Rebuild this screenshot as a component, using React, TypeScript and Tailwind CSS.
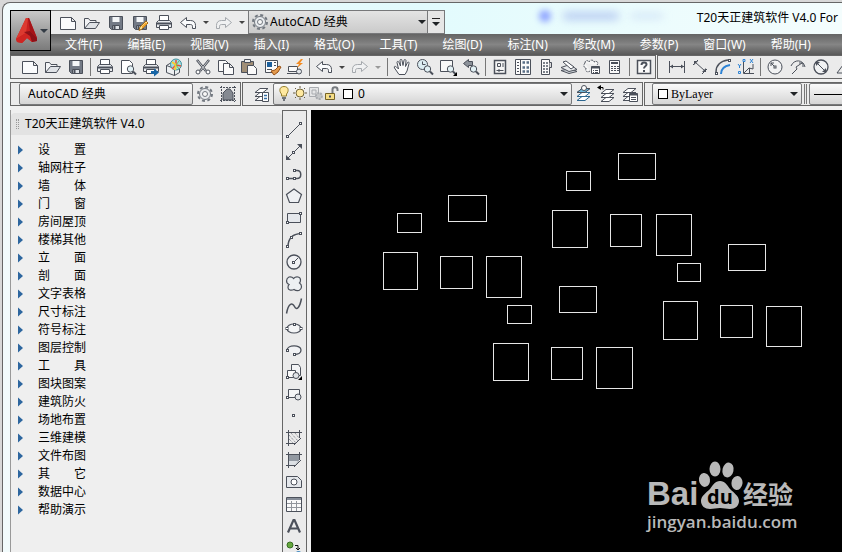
import { useState } from "react";
import type { ReactNode } from "react";
import clsx from "clsx";

const INK = "#4b505a";

const disk = (
  <>
    <path d="M3.500 3.500h13v13h-11l-2-2z" fill="#737a86" />
    <path d="M6.500 4h7v5h-7z" fill="#f4f6f8" stroke="none" />
    <path d="M6.500 12.500h7v4h-7z" fill="#dfe3e8" />
    <path d="M8.500 13v3" strokeWidth="2" />
  </>
);

const printer = (
  <>
    <path d="M5.500 8v-5.500h9V8" fill="#fff" />
    <path d="M4.500 7.500h11l2 2v5h-15v-5z" fill="#e9ebee" />
    <path d="M3 10.500h14" strokeWidth="2" />
    <path d="M5.500 12.500h9v4h-9z" fill="#fff" />
  </>
);

const gear = (
  <>
    <circle cx="10" cy="10" r="7" strokeWidth="2" strokeDasharray="3 2.500" stroke="#737981" />
    <circle cx="10" cy="10" r="5.500" fill="#e8ebee" stroke="#737981" />
    <circle cx="10" cy="10" r="2.500" fill="#f8f8f8" stroke="#737981" />
  </>
);

const magnifier = (
  <>
    <circle cx="12.500" cy="12" r="3.200" fill="#e2f1f5" />
    <path d="M15 14.500l3 3" strokeWidth="2" />
  </>
);

const layers = (
  <>
    <path d="M3 16.500h8l5-4H8z" fill="#fff" />
    <path d="M3 12.500h8l5-4H8z" fill="#fff" />
    <path d="M3 8.500h8l5-4H8z" fill="#fff" />
  </>
);

const node = (x: number, y: number) => (
  <rect x={x - 1} y={y - 1} width="2" height="2" fill="#fff" />
);

const icons: Record<string, ReactNode> = {
  new: <path d="M2.500 4.500h11l4 4v8h-15zM13.500 4.500v4h4" fill="#fafbfc" />,
  open: (
    <>
      <path d="M2.500 15.500v-10h4l1.500 2h6v2" fill="#f2f3f5" />
      <path d="M2.500 15.500l5-6h10l-4 6z" fill="#dfe2e6" />
    </>
  ),
  save: disk,
  saveAs: (
    <>
      {disk}
      <path d="M9 17.500l1-3.500 6-6 2 2-6 6z" fill="#fff1b0" stroke="#a46a16" />
      <path d="M12 14.500l4.500-4.500" stroke="#f1a52d" strokeWidth="2" />
    </>
  ),
  print: printer,
  preview: (
    <>
      <path d="M3.500 3.500h8l3 3v10h-11z" fill="#fff" />
      {magnifier}
    </>
  ),
  publish: (
    <>
      {printer}
      <path d="M10 15.500h4" stroke="#1766a6" strokeWidth="3" />
      <path d="M13 11.500l5 4-5 4z" fill="#1766a6" stroke="none" />
    </>
  ),
  globe: (
    <>
      <path d="M2.500 8.500l5-3 8 3v7l-5 3-8-3z" fill="#edf0f2" />
      <path d="M2.500 8.500l8 3v7" />
      <circle cx="12" cy="7.500" r="5.500" fill="#9fdde4" stroke="#42929d" />
      <path d="M12 3v5l5 1M12 8l-4 4" stroke="#e5523a" strokeWidth="1.500" />
      <path d="M8 5l4 3-1 5" stroke="#f7cf31" strokeWidth="2" />
      <path d="M15 4l-3 4 3 4" stroke="#6fbf58" />
    </>
  ),
  cut: (
    <>
      <path d="M4 3l9 11M16 3L7 14" strokeWidth="2.500" />
      <path d="M4.500 3.500l8 10M15.500 3.500l-8 10" stroke="#eceef0" strokeWidth="0.800" />
      <circle cx="5" cy="15" r="2" fill="#fff" />
      <circle cx="15" cy="15" r="2" fill="#fff" />
    </>
  ),
  copy: (
    <>
      <path d="M2.500 3.500h7l3 3v8h-10z" fill="#fafafa" />
      <path d="M7.500 6.500h6l4 4v7h-10zM13.500 6.500v4h4" fill="#fafafa" />
    </>
  ),
  paste: (
    <>
      <path d="M2.500 4.500h12v11h-12z" fill="#a08e76" />
      <path d="M5.500 2.500h6v3h-6z" fill="#eee" />
      <path d="M8.500 8.500h6l3 3v6h-9z" fill="#fafafa" />
    </>
  ),
  match: (
    <>
      <path d="M3.500 3.500h12v12h-12z" fill="#fafafa" />
      <path d="M5 5h5v5H5z" fill="#1b5f9c" stroke="none" />
      <path d="M12 5.500h2M12 8.500h2M5 12.500h5" />
      <path d="M9 14l4-1 4-4 2 1-3 5-4 3z" fill="#e29a4d" stroke="#9a5116" />
    </>
  ),
  blockEdit: (
    <>
      <path d="M3.500 9.500h9v5h-9z" fill="#fafafa" />
      <path d="M2 16.500h11" />
      <circle cx="14" cy="14.500" r="2.500" fill="#e2e6ea" />
      <path d="M16 2l-5 5h3l-2 4 6-5h-3l3-4z" fill="#f38b21" stroke="none" />
    </>
  ),
  undo: <path d="M2.500 9.500l6-5v3h4c3.500 0 5 2 5 5v3h-3v-2c0-1.500-1-2-2-2h-4v3z" fill="#fafbfc" />,
  redo: (
    <path
      d="M17.500 9.500l-6-5v3h-4c-3.500 0-5 2-5 5v3h3v-2c0-1.500 1-2 2-2h4v3z"
      fill="#f0f1f2"
      stroke="#a4a8ad"
    />
  ),
  pan: (
    <path
      d="M7 17.500L2.500 11c-1-2 1-2 2-1l2 2L5 5.500c0-1.500 1.500-1.500 2 0L8.500 9 8 3.500c0-1.500 2-1.500 2 0l1 5 1-5c0-1.500 2-1 2 0l-.5 6 2-4c1-1 2 0 1.500 1L15 14l-2 3.500z"
      fill="#fafafa"
    />
  ),
  zoomRealtime: (
    <>
      <circle cx="7.500" cy="7.500" r="5" fill="#dcedf2" />
      <path d="M7.500 4.500v3h3" />
      {magnifier}
    </>
  ),
  zoomWindow: (
    <>
      <path d="M2.500 3.500h12v11h-12z" fill="#f7f8f8" />
      {magnifier}
      <path d="M19 15v4h-4z" fill="#000" stroke="none" />
    </>
  ),
  zoomPrevious: (
    <>
      <path d="M2.500 6.500l5-4v2h4v4h-4v2z" fill="#8c929a" />
      {magnifier}
    </>
  ),
  properties: (
    <>
      <path d="M4.500 3.500h11v13h-11z" fill="#f5f5f5" strokeWidth="1.500" />
      <path d="M7.500 6.500h3v3h-3zM13 6v4M6.500 13.500h7M9 12v3" />
    </>
  ),
  designCenter: (
    <>
      <path d="M2.500 2.500h15v15h-15z" fill="#fafafa" />
      <path d="M7.500 3v14M4 5.500h2M4 8.500h2M4 11.500h2M4 14.500h2" />
      <path d="M9.500 5.500h2.500M9.500 10.500h2.500M9.500 14.500h2.500M13.500 5.500h2.500M13.500 10.500h2.500M13.500 14.500h2.500" strokeWidth="2.500" stroke="#5a6f86" />
    </>
  ),
  palettes: (
    <>
      <path d="M5.500 2.500h8v15h-8z" fill="#fafafa" />
      <path d="M8 5v11M11 5v11" strokeWidth="2" strokeDasharray="2 1" stroke="#7c828b" />
      <path d="M13.500 5.500h2v5h-2" fill="#ddd" />
    </>
  ),
  sheetSet: (
    <>
      <path d="M2 13.500l8 3 8-2-6-3z" fill="#cfd4d9" />
      <path d="M2 10.500l8 4 8-2-7-5z" fill="#e9ebed" />
      <path d="M4 5l3-1 8 6-3 2z" fill="#fff" />
    </>
  ),
  markup: (
    <>
      <path d="M3 6c0-3 3-3 4-1 1-3 5-2 5 0 3-2 5 1 3 3M3 6c-2 2-1 5 1 5-1 3 1 5 4 3" strokeDasharray="2 1" fill="#f6f6f6" />
      <path d="M9.500 9.500h8v7h-8z" fill="#fff" />
      <path d="M9.500 10.500h8" strokeWidth="2" />
      <path d="M11 13.500h1M13 13.500h3M11 15.500h1M13 15.500h3" />
    </>
  ),
  calculator: (
    <>
      <path d="M4.500 3.500h10v13h-10z" fill="#fafafa" />
      <path d="M6 6h7" strokeWidth="2" />
      <path d="M6 9.500h8M6 11.500h8M6 13.500h8" strokeDasharray="2 1" />
    </>
  ),
  help: (
    <>
      <path d="M3.500 3.500h13v13h-13z" fill="#fafafa" strokeWidth="1.500" />
      <path d="M7.500 8c0-3.500 5-3 5-.5 0 2-2.500 1.500-2.500 4M10 13v2" strokeWidth="2" />
    </>
  ),
  dimLinear: (
    <>
      <path d="M2.500 4v12M17.500 4v12M3 9.500h14" />
      <path d="M3 9.500l3-2v4zM17 9.500l-3-2v4z" fill={INK} stroke="none" />
    </>
  ),
  dimAligned: (
    <>
      <path d="M3 8l5-5M12 17l5-5M5 5l10 9" />
      <path d="M4 4h4l-4 4zM16 15h-4l4-4z" fill={INK} stroke="none" />
    </>
  ),
  dimArc: (
    <>
      <path d="M3 15c0-6 4-11 12-12" strokeWidth="1.500" />
      <path d="M8 17c0-5 3-8 9-9" stroke="#2d83d5" strokeWidth="2" />
      {node(3.5, 16.5)}
      {node(16.5, 3.5)}
    </>
  ),
  dimOrdinate: (
    <>
      <path d="M7.500 5v11.500H18M8 16l5-5 4 1V7M13.500 11v5" />
      <path d="M2 7l1.500 2L5 7M3.500 9v2M14 2l3 4M17 2l-3 4M7 2.500h2v2H7zM2.500 14.500h2v2h-2z" stroke="#2d83d5" />
    </>
  ),
  dimRadius: (
    <>
      <circle cx="10" cy="10" r="7" fill="#f1f2f3" />
      <path d="M10 10L6 6M6 9V6h3" />
      {node(10, 10)}
    </>
  ),
  dimJogged: (
    <>
      <path d="M3 9c3-7 12-7 14 1" />
      <path d="M4 17l5-5-1-2 6-4M11 6h4v4" />
    </>
  ),
  dimDiameter: (
    <>
      <circle cx="10" cy="10" r="7" fill="#f1f2f3" strokeWidth="1.300" />
      <path d="M5 5l10 10" />
      <path d="M5 5h4L5 9zM15 15h-4l4-4z" fill={INK} stroke="none" />
    </>
  ),
  dimAngular: <path d="M3 16L12 4M3 16h14M10 7c3 2 4 5 4 9" />,
  gear,
  workspace: (
    <>
      <path d="M3.500 2v16M16.500 2v16M2 3.500h16M2 16.500h16" strokeDasharray="2 1" />
      <path d="M5 9l4-4h3l3 4v7H5z" fill="#858a92" />
    </>
  ),
  layerProps: (
    <>
      {layers}
      <path d="M10.500 8.500h6v9h-6z" fill="#fff" />
      <path d="M12 11.500h3M12 14.500h3" stroke="#356fa5" strokeWidth="1.500" />
    </>
  ),
  layerMake: (
    <>
      <g stroke="#2d6790">{layers}</g>
      <path d="M3 8.500h8l5-4H8z" fill="#6db6da" />
      <circle cx="10" cy="4" r="2.500" fill="#fff" />
    </>
  ),
  layerPrev: (
    <>
      <g transform="translate(1 1)">{layers}</g>
      <path d="M1 3.500h5v2" stroke="#000" />
      <path d="M4 1v5L0 3.500z" fill="#000" stroke="none" />
    </>
  ),
  layerState: (
    <>
      {layers}
      <path d="M9.500 9.500h8v8h-8z" fill="#fff" />
      <path d="M9.500 10.500h8" strokeWidth="2" />
      <path d="M11 13.500h5M11 15.500h5" />
    </>
  ),
  bulb: (
    <>
      <path d="M10 2.500c5 0 5 5 2.500 7.500v2h-5v-2C5 7.500 5 2.500 10 2.500z" fill="#ffe9a0" stroke="#96802e" />
      <path d="M8 14h4M9 16h2" strokeWidth="1.500" />
    </>
  ),
  sun: (
    <>
      <circle cx="10" cy="9" r="4" fill="#ffe9a0" stroke="#746639" />
      <path d="M10 2v2M10 14v2M3 9h2M15 9h2M5 4l1 1M14 13l1 1M15 4l-1 1M5 14l1-1" stroke="#665d42" />
    </>
  ),
  freeze: (
    <g stroke="#a9acb0">
      <path d="M3.500 3.500h9v9h-9zM6 6h4v4H6z" fill="#e5e6e7" />
      <circle cx="13" cy="12" r="3" fill="#c5c7c9" strokeWidth="2" strokeDasharray="2 1" />
    </g>
  ),
  unlock: (
    <>
      <path d="M10.500 9V5.500c0-3 5-3 5 0V7" strokeWidth="2" stroke="#767a7f" />
      <path d="M3.500 9.500h9v6h-9z" fill="#f5dd86" stroke="#766325" />
      <path d="M8 11.500v2" strokeWidth="2" />
    </>
  ),
  line: (
    <>
      <path d="M4 16L16 4" />
      {node(3.5, 16.5)}
      {node(16.5, 3.5)}
    </>
  ),
  xline: (
    <>
      <path d="M4 16L16 4" />
      <path d="M2 18v-5l5 5zM18 2v5l-5-5z" fill={INK} stroke="none" />
      {node(9.5, 10.5)}
    </>
  ),
  polyline: (
    <>
      <path d="M4 14.500h9c5 0 5-8 0-8h-2" strokeWidth="1.500" />
      {node(3.5, 14.5)}
      {node(10.5, 14.5)}
      {node(10.5, 6.5)}
    </>
  ),
  polygon: <path d="M10 3l7.500 5.500-3 8h-9l-3-8z" fill="#eef0f3" strokeWidth="1.200" />,
  rectangle: (
    <>
      <path d="M3.500 5.500h13v9h-13z" fill="#e5e8ec" />
      {node(3.5, 14.5)}
      {node(16.5, 5.5)}
    </>
  ),
  arc: (
    <>
      <path d="M4 17C4 9 8 4 17 3.500" strokeWidth="1.500" />
      {node(3.5, 16.5)}
      {node(7.5, 7.5)}
      {node(16.5, 3.5)}
    </>
  ),
  circle: (
    <>
      <circle cx="10" cy="10" r="7" fill="#f1f2f4" strokeWidth="1.300" />
      <path d="M10 10l4-4" />
      {node(9.5, 10.5)}
    </>
  ),
  cloud: (
    <path
      d="M9.500 4.500c3-3 7-1.500 7 1.500 0 2-1 3-1 3 3 2 2.500 6-.5 7.500-3 .5-5-1-5-1-3 1.500-6 .5-6-2 0-2 1-3 1-3-3.500-1.500-3-6 0-7.500 3-.5 4.500 1.500 4.500 1.500z"
      fill="#edf0f2"
      strokeWidth="1.200"
    />
  ),
  spline: <path d="M2.500 17.500c2-11 6-11 8-7s5 2 7-8" strokeWidth="1.500" />,
  ellipse: (
    <>
      <ellipse cx="10" cy="10.500" rx="7" ry="4.500" fill="#f4f5f6" strokeWidth="1.200" />
      {node(3, 10.5)}
      {node(17, 10.5)}
      {node(10.5, 6.5)}
    </>
  ),
  ellipseArc: (
    <>
      <path d="M3 10.500c0-6 14-6 14-.5 0 3-3 4.500-7 4.500" strokeWidth="1.300" fill="#f1f2f4" />
      {node(3.5, 10.5)}
      {node(10.5, 14.5)}
    </>
  ),
  insert: (
    <>
      <path d="M7.500 2.500h7l2 3v8h-9z" fill="#f2f3f5" />
      <path d="M3.500 8.500h8v7h-8z" fill="#fafafa" />
      <circle cx="12" cy="13.500" r="3" fill="#e2e5e8" />
      {node(3.5, 15.5)}
      <path d="M18 14v4h-4z" fill="#000" stroke="none" />
    </>
  ),
  block: (
    <>
      <path d="M4.500 5.500h11v8h-11z" fill="#f4f5f6" />
      <circle cx="14" cy="13" r="3" fill="#e2e5e8" />
      {node(3.5, 13.5)}
    </>
  ),
  point: node(9.5, 9.5),
  hatch: (
    <>
      <path d="M4.500 2v16M2 4.500h16M15.500 2v8M2 15.500h9M10 17l7-7" />
      <path d="M5 7l7 8M5 11l4 4M7 5l7 8M11 5l4 5" stroke="#737983" strokeDasharray="1 1" />
    </>
  ),
  gradient: (
    <>
      <path d="M5 5h10v6l-4 4H5z" fill="#9299a2" stroke="none" />
      <path d="M5 11h9l-3 4H5z" fill="#dce0e4" stroke="none" />
      <path d="M4.500 2v16M2 4.500h16M15.500 2v8M2 15.500h9M10 17l7-7" />
    </>
  ),
  region: (
    <>
      <path d="M2.500 4.500h11l4 4v7h-15z" fill="#e4e7eb" />
      <circle cx="10" cy="10" r="3" fill="#fff" />
    </>
  ),
  table: (
    <>
      <path d="M2.500 3.500h15v14h-15z" fill="#fafafa" />
      <path d="M3 5h14" strokeWidth="2" stroke="#858c97" />
      <path d="M3 9.500h14M3 13.500h14M7.500 7v10M12.500 7v10" stroke="#92969c" />
    </>
  ),
  text: <path d="M4 16.500L9.500 4h1L16 16.500M6 12.500h8" strokeWidth="2.200" />,
  addSelected: (
    <>
      <circle cx="6" cy="7" r="3" fill="#65a83d" stroke="#376d23" />
      <path d="M11 7.500h3v4M12 10l2 2 2-2" stroke="#111" />
      <circle cx="14.500" cy="16.500" r="3" fill="#c2e3f8" stroke="#2375b6" />
    </>
  ),
};

const Icon = ({ name }: { name: string }) => (
  <svg
    className="w-5 h-5 shrink-0"
    viewBox="0 0 20 20"
    fill="none"
    stroke={INK}
    aria-hidden="true"
  >
    {icons[name]}
  </svg>
);

const Caret = () => (
  <svg className="w-2 h-1 shrink-0" viewBox="0 0 8 4" aria-hidden="true">
    <path d="M0 0h8L4 4z" fill="#202326" />
  </svg>
);

interface ToolbarItemsProps {
  items: string[];
  wide?: boolean;
}

// "|" is a separator, "v" a history drop-down
const ToolbarItems = ({ items, wide = false }: ToolbarItemsProps) => (
  <>
    {items.map((item, index) => {
      if (item === "|") {
        return (
          <span key={index} className="flex w-[6px] justify-center shrink-0">
            <span className="w-px h-[18px] bg-[#777]" />
          </span>
        );
      }
      if (item === "v") {
        return (
          <button
            key={index}
            aria-label="history"
            className={clsx(
              "flex items-center justify-center shrink-0 h-5",
              wide ? "w-3" : "w-[13px]"
            )}
          >
            <svg className="w-[6px] h-[3px]" viewBox="0 0 6 3">
              <path d="M0 0h6L3 3z" fill={items[index - 1] === "redo" && !wide ? "#999" : "#444"} />
            </svg>
          </button>
        );
      }
      return (
        <button
          key={index}
          aria-label={item}
          className={clsx(
            "flex items-center justify-center shrink-0 h-5 hover:bg-white/60",
            wide ? "w-6" : "w-[23px]"
          )}
        >
          <Icon name={item} />
        </button>
      );
    })}
  </>
);

interface ComboProps {
  label: string;
  options: string[];
  className?: string;
  selectClassName?: string;
  children?: ReactNode;
}

const Combo = ({ label, options, className, selectClassName, children }: ComboProps) => (
  <label
    className={clsx(
      "flex items-center shrink-0 border border-[#77787a] bg-linear-to-b",
      className
    )}
  >
    {children}
    <select
      aria-label={label}
      className={clsx("appearance-none flex-1 min-w-0 h-full outline-none", selectClassName)}
    >
      {options.map((option) => (
        <option key={option}>{option}</option>
      ))}
    </select>
    <Caret />
  </label>
);

const menus = [
  "文件(F)",
  "编辑(E)",
  "视图(V)",
  "插入(I)",
  "格式(O)",
  "工具(T)",
  "绘图(D)",
  "标注(N)",
  "修改(M)",
  "参数(P)",
  "窗口(W)",
  "帮助(H)",
];

const standardTools = [
  "new", "open", "save", "|",
  "print", "preview", "publish", "globe", "|",
  "cut", "copy", "paste", "match", "blockEdit", "|",
  "undo", "v", "redo", "v", "|",
  "pan", "zoomRealtime", "zoomWindow", "zoomPrevious", "|",
  "properties", "designCenter", "palettes", "sheetSet", "markup", "calculator", "|",
  "help",
];

const dimensionTools = [
  "dimLinear", "dimAligned", "dimArc", "dimOrdinate", "|",
  "dimRadius", "dimJogged", "dimDiameter", "dimAngular",
];

const drawTools = [
  "line", "xline", "polyline", "polygon", "rectangle", "arc", "circle",
  "cloud", "spline", "ellipse", "ellipseArc", "insert", "block", "point",
  "hatch", "gradient", "region", "table", "text", "addSelected",
];

const sideItems = [
  "设　　置",
  "轴网柱子",
  "墙　　体",
  "门　　窗",
  "房间屋顶",
  "楼梯其他",
  "立　　面",
  "剖　　面",
  "文字表格",
  "尺寸标注",
  "符号标注",
  "图层控制",
  "工　　具",
  "图块图案",
  "建筑防火",
  "场地布置",
  "三维建模",
  "文件布图",
  "其　　它",
  "数据中心",
  "帮助演示",
];

// x, y, width, height in drawing units
const rooms = [
  [86, 103, 24, 19],
  [137, 85, 38, 26],
  [72, 142, 34, 37],
  [129, 146, 32, 32],
  [175, 146, 35, 41],
  [196, 195, 24, 18],
  [182, 233, 35, 37],
  [240, 237, 31, 32],
  [285, 237, 36, 41],
  [255, 61, 24, 19],
  [307, 43, 37, 26],
  [241, 100, 35, 37],
  [299, 104, 31, 32],
  [345, 104, 35, 41],
  [248, 176, 37, 26],
  [366, 153, 23, 18],
  [417, 134, 37, 26],
  [352, 191, 34, 38],
  [409, 195, 32, 32],
  [455, 196, 35, 40],
];

const TitleRow = () => (
  <div className="flex items-start h-6 pl-[41px]">
    <div className="flex items-center h-6 pl-[5px] bg-[#ececec] border-t border-[#777] shrink-0">
      <ToolbarItems
        wide
        items={["new", "open", "save", "saveAs", "print", "undo", "v", "redo", "v"]}
      />
    </div>
    <Combo
      label="workspace"
      options={["AutoCAD 经典"]}
      className="w-[180px] h-6 pl-px pr-px from-[#e4e4e4] to-[#cacaca]"
    >
      <Icon name="gear" />
    </Combo>
    <button
      aria-label="customize"
      className="flex flex-col items-center justify-center gap-[3px] w-[17px] h-6 border border-l-0 border-[#77787a] bg-[#e6e6e6] shrink-0"
    >
      <span className="w-2 h-px bg-[#222]" />
      <Caret />
    </button>
    {/* tabs of the window behind, showing through the glass */}
    <div className="flex items-center gap-3 h-3 ml-[94px] shrink-0" aria-hidden="true">
      <span className="w-3 h-3 rounded-full bg-[#8fa4ff] blur-[3px]" />
      <span className="w-14 h-2 rounded-full bg-[#b9cdf2] blur-[4px]" />
      <span className="w-8 h-1 rounded-full bg-[#c9dcf5] blur-[4px]" />
    </div>
    <h1 className="ml-auto pr-1 leading-4 whitespace-nowrap">T20天正建筑软件 V4.0 For</h1>
  </div>
);

const Watermark = () => (
  <div className="absolute right-[45px] bottom-[18px] w-[150px] text-[#b9b9b9]">
    <div className="flex items-end h-[50px] font-bold">
      <span
        className="w-[51px] text-[33px] leading-8"
        style={{ fontFamily: '"Liberation Sans", sans-serif' }}
      >
        Bai
      </span>
      <svg className="w-[45px] h-[50px] shrink-0" viewBox="0 0 45 50">
        <g fill="#b9b9b9">
          <ellipse cx="6.500" cy="20" rx="5.500" ry="7" transform="rotate(-8 6 20)" />
          <ellipse cx="17" cy="9" rx="5.500" ry="7.500" />
          <ellipse cx="30" cy="10" rx="5.500" ry="7.500" transform="rotate(12 30 10)" />
          <ellipse cx="39" cy="23" rx="5.500" ry="7" transform="rotate(8 39 23)" />
          <path d="M22 21c5 0 7 4 10 8 4 4 9 7 9 12 0 5-4 8-9 8-4 0-6-1-10-1s-6 1-10 1c-5 0-9-3-9-8 0-5 5-8 9-12 3-4 5-8 10-8z" />
        </g>
        <text x="22" y="44" textAnchor="middle" fontSize="20" fontFamily="Open Sans" fill="#000">
          du
        </text>
      </svg>
      <span className="text-[25px] leading-8">经验</span>
    </div>
    <div
      className="text-[17px] font-semibold leading-6"
      style={{ fontFamily: '"Open Sans", sans-serif' }}
    >
      jingyan.baidu.com
    </div>
  </div>
);

export default function App() {
  const [activeItem, setActiveItem] = useState("");

  return (
    <div
      className="flex flex-col h-screen overflow-hidden bg-[#d8d8d8] pt-[2px] pl-[2px] text-xs text-black"
      style={{ fontFamily: '"Noto Sans", "Noto Sans CJK SC", sans-serif' }}
    >
      <div className="flex flex-col flex-1 min-h-0 border-t border-l border-[#666] rounded-tl-lg overflow-hidden pt-[7px] pl-[7px] bg-linear-to-r from-[#f2fbfc] via-[#e2fbfd] to-[#f4fdfd]">
        <header className="relative shrink-0">
          <TitleRow />
          <nav className="flex items-center gap-[25px] h-[21px] pl-[55px] text-white bg-linear-to-b from-[#646464] via-[#858585] to-[#595959]">
            {menus.map((menu) => (
              <button key={menu} className="whitespace-nowrap hover:text-slate-200">
                {menu}
              </button>
            ))}
          </nav>
          <button
            aria-label="application menu"
            className="absolute left-0 top-0 flex items-center w-[41px] h-[41px] pl-1 border border-black bg-linear-to-b from-[#c9c9c9] to-[#7b7b7b]"
          >
            <svg className="w-6 h-7" viewBox="0 0 24 28">
              <path d="M11 1L1 22l1 3 5 1 5-5 5 4 5-1v-3L14 1z" fill="#c9201f" />
              <path d="M11 1L1 22l10-6 2-15z" fill="#dc3a30" />
              <path d="M13 1l2 13 7 7L14 1z" fill="#a51419" />
              <path d="M1 22l10-6 7 4-1 5-5-4-5 5-5-1z" fill="#cf2522" />
              <path d="M9 15l6-1 7 7v3l-5 1-2-6z" fill="#8d1118" />
            </svg>
            <svg className="w-2 h-1 ml-px" viewBox="0 0 8 4">
              <path d="M0 0h8L4 4z" fill="#333b45" />
            </svg>
          </button>
        </header>

        <div className="flex flex-col flex-1 min-h-0 bg-[#f0f0f0]">
          <div className="flex gap-px h-6 shrink-0 overflow-hidden">
            <div className="flex items-center shrink-0 border border-[#666] bg-[#ebebeb] pl-[7px] w-[646px]">
              <ToolbarItems items={standardTools} />
            </div>
            <div className="flex items-center flex-1 border border-[#666] bg-[#ebebeb] pl-[7px]">
              <ToolbarItems items={dimensionTools} />
            </div>
          </div>

          <div className="flex gap-px h-6 mt-[3px] shrink-0 overflow-hidden">
            <div className="flex items-center w-[231px] shrink-0 border border-[#666] bg-[#ebebeb] pl-2">
              <Combo
                label="workspace style"
                options={["AutoCAD 经典"]}
                className="w-[174px] h-[22px] rounded-[2px] pl-2 pr-[3px] from-[#fafafa] to-[#d5d5d5]"
              />
              <ToolbarItems items={["gear", "workspace"]} />
            </div>
            <div className="flex items-center w-[401px] shrink-0 border border-[#666] bg-[#ebebeb] pl-[7px]">
              <ToolbarItems items={["layerProps"]} />
              <Combo
                label="layer"
                options={["0"]}
                className="w-[299px] h-[22px] rounded-[2px] pr-[3px] from-[#fafafa] to-[#d5d5d5]"
                selectClassName="pl-[5px]"
              >
                <div className="flex items-center">
                  <Icon name="bulb" />
                  <span className="flex -ml-1">
                    <Icon name="sun" />
                  </span>
                  <span className="flex -ml-1">
                    <Icon name="freeze" />
                  </span>
                  <span className="flex -ml-1">
                    <Icon name="unlock" />
                  </span>
                  <span className="w-[10px] h-[10px] ml-px border border-black bg-white" />
                </div>
              </Combo>
              <ToolbarItems items={["layerMake", "layerPrev", "layerState"]} />
            </div>
            <div className="flex items-center flex-1 border border-[#666] bg-[#ebebeb] pl-[7px]">
              <Combo
                label="color"
                options={["ByLayer"]}
                className="w-[150px] h-[22px] rounded-[2px] pl-[5px] pr-[3px] from-[#fafafa] to-[#d5d5d5]"
                selectClassName="pl-[3px] font-['Liberation_Serif']"
              >
                <span className="w-[10px] h-[10px] border border-black bg-white" />
              </Combo>
              <span className="w-[3px] h-5 mx-[2px] border-x border-[#777] shrink-0" />
              <button
                aria-label="linetype"
                className="flex items-center w-40 h-[22px] pl-1 rounded-[2px] border border-[#77787a] bg-linear-to-b from-[#fafafa] to-[#d5d5d5] shrink-0"
              >
                <span className="w-full h-px bg-black" />
              </button>
            </div>
          </div>

          <main className="flex flex-1 min-h-0 mt-1">
            <aside className="w-[272px] shrink-0 pt-[3px] bg-[#efefef] border-l border-[#999]">
              <div className="flex items-center gap-[6px] h-[22px] pl-[5px] rounded-t bg-[#e3e3e3]">
                <span className="w-[3px] h-[10px] border-x border-dotted border-[#999]" />
                <h2>T20天正建筑软件 V4.0</h2>
              </div>
              <ul className="pt-[6px]">
                {sideItems.map((item) => (
                  <li key={item}>
                    <button
                      onClick={() => setActiveItem(item)}
                      className={clsx(
                        "flex items-center gap-[14px] w-full h-[18px] pl-[7px]",
                        activeItem === item && "bg-blue-100"
                      )}
                    >
                      <svg className="w-[6px] h-[10px]" viewBox="0 0 6 10">
                        <path d="M0 0.500l5 4.500-5 4.500z" fill="#2d669f" />
                      </svg>
                      {item}
                    </button>
                  </li>
                ))}
              </ul>
            </aside>
            <div className="flex flex-col items-start w-[25px] shrink-0 pt-2 border border-b-0 border-[#666] bg-[#ebebeb] overflow-hidden">
              {drawTools.map((tool) => (
                <button
                  key={tool}
                  aria-label={tool}
                  className="flex items-center justify-center w-[22px] h-[22px] shrink-0 hover:bg-white"
                >
                  <Icon name={tool} />
                </button>
              ))}
            </div>
            <section className="relative flex-1 min-w-0 ml-1 bg-black overflow-hidden">
              <svg className="w-full h-full" fill="none" stroke="#e6e6e6" shapeRendering="crispEdges">
                {rooms.map(([x, y, width, height]) => (
                  <rect key={`${x}-${y}`} x={x + 0.5} y={y + 0.5} width={width} height={height} />
                ))}
              </svg>
              <Watermark />
            </section>
          </main>
        </div>
      </div>
    </div>
  );
}
